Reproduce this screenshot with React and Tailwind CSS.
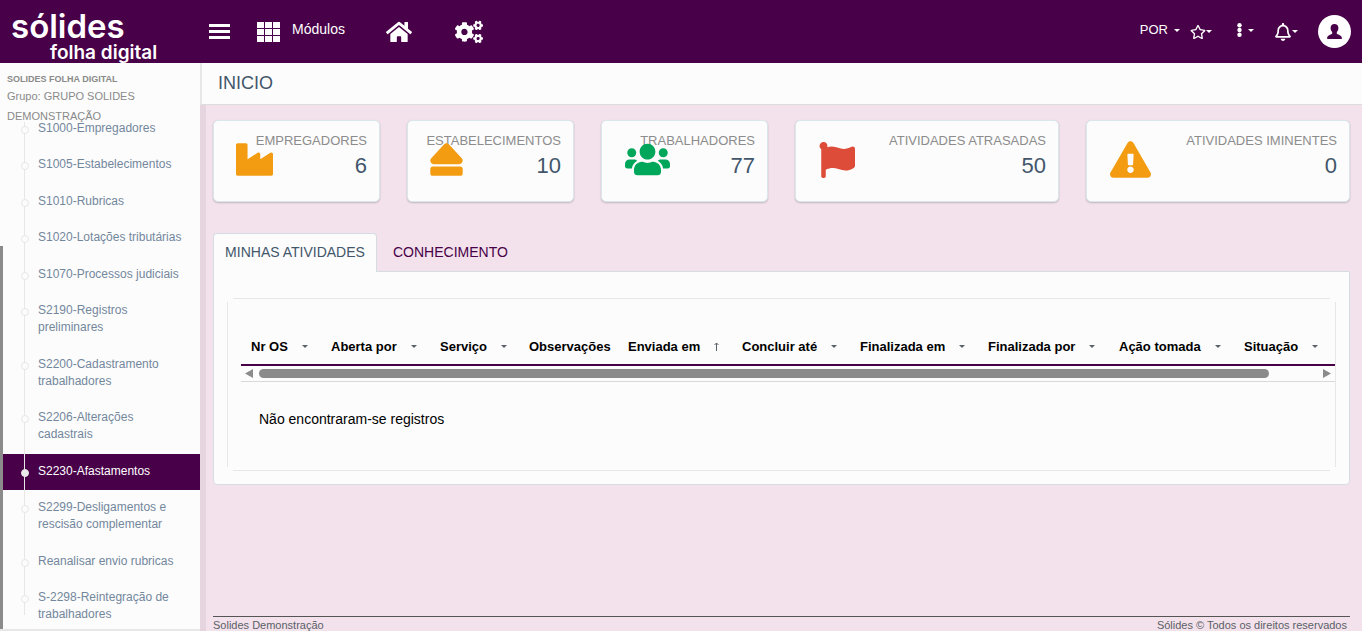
import {
  FaCogs,
  FaEject,
  FaExclamationTriangle,
  FaFlag,
  FaHome,
  FaIndustry,
  FaRegBell,
  FaRegStar,
  FaUsers,
} from 'react-icons/fa';

const MENU = [
  { label: 'S1000-Empregadores' },
  { label: 'S1005-Estabelecimentos' },
  { label: 'S1010-Rubricas' },
  { label: 'S1020-Lotações tributárias' },
  { label: 'S1070-Processos judiciais' },
  { label: 'S2190-Registros preliminares' },
  { label: 'S2200-Cadastramento trabalhadores' },
  { label: 'S2206-Alterações cadastrais' },
  { label: 'S2230-Afastamentos', active: true },
  { label: 'S2299-Desligamentos e rescisão complementar' },
  { label: 'Reanalisar envio rubricas' },
  { label: 'S-2298-Reintegração de trabalhadores' },
];

const CARDS = [
  { label: 'EMPREGADORES', value: 6, Icon: FaIndustry, size: 37, box: 'left-[22px] w-[37px]', color: 'text-[#f39c12]', span: 'col-span-2' },
  { label: 'ESTABELECIMENTOS', value: 10, Icon: FaEject, size: 37, box: 'left-[20px] w-[37px]', color: 'text-[#f39c12]', span: 'col-span-2' },
  { label: 'TRABALHADORES', value: 77, Icon: FaUsers, size: 45, box: 'left-[23px] w-[45px]', color: 'text-[#00a65a]', span: 'col-span-2' },
  { label: 'ATIVIDADES ATRASADAS', value: 50, Icon: FaFlag, size: 36, box: 'left-[23px] w-[36px]', color: 'text-[#dd4b39]', span: 'col-span-3' },
  { label: 'ATIVIDADES IMINENTES', value: 0, Icon: FaExclamationTriangle, size: 41, box: 'left-[23px] w-[41px]', color: 'text-[#f39c12]', span: 'col-span-3' },
];

const COLUMNS = [
  { label: 'Nr OS', width: 'w-[80px]', sort: 'none' },
  { label: 'Aberta por', width: 'w-[109px]', sort: 'none' },
  { label: 'Serviço', width: 'w-[89px]', sort: 'none' },
  { label: 'Observações', width: 'w-[99px]' },
  { label: 'Enviada em', width: 'w-[114px]', sort: 'asc' },
  { label: 'Concluir até', width: 'w-[118px]', sort: 'none' },
  { label: 'Finalizada em', width: 'w-[128px]', sort: 'none' },
  { label: 'Finalizada por', width: 'w-[131px]', sort: 'none' },
  { label: 'Ação tomada', width: 'w-[125px]', sort: 'none' },
  { label: 'Situação', width: '', sort: 'none' },
];

function Caret({ className = '' }) {
  return (
    <svg viewBox="0 0 6 3" className={`h-[3px] w-[6px] shrink-0 ${className}`} fill="currentColor" aria-hidden="true">
      <path d="M0 0h6L3 3z" />
    </svg>
  );
}

function TopBar() {
  return (
    <header className="flex h-[63px] shrink-0 items-center bg-[#480048] pr-[11px] text-white">
      <a
        href="#inicio"
        className="flex h-full w-[200px] shrink-0 flex-col pt-[10px] pl-[11px] font-[Inter,sans-serif] font-semibold"
      >
        <span className="text-[33px] leading-[33px]">sólides</span>
        <span className="pl-[39px] text-[19px] leading-[20px]">folha digital</span>
      </a>
      <button type="button" aria-label="Menu" className="ml-[9px] flex w-[21px] flex-col gap-[3px]">
        <span className="h-[3px] w-full bg-white" />
        <span className="h-[3px] w-full bg-white" />
        <span className="h-[3px] w-full bg-white" />
      </button>
      <button type="button" className="ml-[27px] flex items-center gap-[12px] text-[14px]">
        <svg viewBox="0 0 23 20" className="h-[20px] w-[23px]" fill="currentColor" aria-hidden="true">
          {[0, 8, 16].map((x) => [0, 7, 14].map((y) => <rect key={`${x}-${y}`} x={x} y={y} width="7" height="6" />))}
        </svg>
        <span className="pb-[4px]">Módulos</span>
      </button>
      <a href="#inicio" aria-label="Início" className="ml-[41px]">
        <FaHome size={26} />
      </a>
      <button type="button" aria-label="Configurações" className="ml-[43px]">
        <FaCogs size={28} />
      </button>

      <div className="ml-auto flex items-center">
        <button type="button" className="flex items-center gap-[6px] pb-[3px] text-[13px]">
          POR
          <Caret />
        </button>
        <button type="button" aria-label="Favoritos" className="ml-[10px] flex items-center">
          <FaRegStar size={16} />
          <Caret />
        </button>
        <button type="button" aria-label="Mais opções" className="ml-[25px] flex items-center gap-[6px] pb-[3px]">
          <svg viewBox="0 0 5 14" className="h-[14px] w-[5px]" fill="currentColor" aria-hidden="true">
            <circle cx="2.5" cy="2.2" r="2.2" />
            <circle cx="2.5" cy="7" r="2.2" />
            <circle cx="2.5" cy="11.8" r="2.2" />
          </svg>
          <Caret />
        </button>
        <button type="button" aria-label="Notificações" className="ml-[20px] flex items-center">
          <FaRegBell size={18} />
          <Caret />
        </button>
        <button type="button" aria-label="Perfil" className="ml-[20px] rounded-full bg-white p-[9px] text-[#480048]">
          <svg viewBox="0 0 15 15" className="h-[15px] w-[15px]" fill="currentColor" aria-hidden="true">
            <path d="M7.5 0C5.200 0 3.600 1.500 3.600 4c0 1.700.6 3.100 1.600 4v1.600C4.800 10.700.6 11 .2 13.600V15h14.600v-1.400C14.400 11 10.200 10.700 9.800 9.600V8c1-.9 1.600-2.300 1.600-4 0-2.500-1.600-4-3.900-4z" />
          </svg>
        </button>
      </div>
    </header>
  );
}

function MenuItem({ label, active }) {
  return (
    <li className={`group ${active ? 'bg-[#480048] text-white' : 'text-[#73879c]'}`}>
      <a href="#menu" className="flex items-stretch">
        <span className="relative ml-[18px] flex w-[8px] shrink-0 items-start justify-center pt-[15px]">
          <span className="absolute -inset-y-px left-[3px] w-px bg-[#e7e7e7] group-first:top-[11px] group-last:bottom-[18px]" />
          <span
            className={`relative h-[8px] w-[8px] rounded-full border border-[#e7e7e7] ${active ? 'bg-[#eaeaea]' : 'bg-[#fcfcfc]'}`}
          />
        </span>
        <span className="pt-[9px] pr-[10px] pb-[10px] pl-[9px] leading-[17px]">{label}</span>
      </a>
    </li>
  );
}

function Sidebar() {
  return (
    <aside className="flex w-[200px] shrink-0 flex-col border-b-2 border-[#e7e7e7] bg-[#fcfcfc] text-[12px]">
      <div className="h-[48px] pt-[9px] pl-[7px] text-[#8a8a8a]">
        <div className="text-[9px] leading-[14px] font-bold">SOLIDES FOLHA DIGITAL</div>
        <div className="pr-[40px] text-[11px] leading-[20px]">Grupo: GRUPO SOLIDES DEMONSTRAÇÃO</div>
      </div>
      <div className="flex min-h-0 flex-1">
        <div className="flex w-[3px] flex-col">
          <div className="mt-[135px] flex-1 bg-[#8b8b8b]" />
        </div>
        <ul className="-mb-[4px] flex flex-1 flex-col justify-between">
          {MENU.map((item) => (
            <MenuItem key={item.label} {...item} />
          ))}
        </ul>
      </div>
    </aside>
  );
}

function StatCard({ label, value, Icon, size, box, color, span }) {
  return (
    <article
      className={`relative h-[82px] rounded-[5px] border border-[#d9e6ea] bg-[#fcfcfc] pt-[10px] pr-[12px] text-right shadow-[0_1px_2px_rgba(0,0,0,0.2)] ${span}`}
    >
      <div className={`absolute inset-y-0 flex items-center justify-center pb-[3px] ${box} ${color}`}>
        <Icon size={size} />
      </div>
      <div className="text-[13px] leading-[20px] whitespace-nowrap text-[#8c8c8c]">{label}</div>
      <div className="text-[22px] leading-[30px] text-[#42566b]">{value}</div>
    </article>
  );
}

function ActivitiesTable() {
  return (
    <div className="pt-[27px] pb-[10px] pl-[13px]">
      <table className="w-full table-fixed text-left text-[14px] text-black">
        <thead>
          <tr className="border-b-2 border-[#480048] text-[13px]">
            {COLUMNS.map((c) => (
              <th key={c.label} scope="col" className={`h-[36px] pl-[10px] font-bold whitespace-nowrap ${c.width}`}>
                <span className="flex items-center gap-[14px]">
                  {c.label}
                  {c.sort === 'none' && <Caret className="text-[#5a6068]" />}
                  {c.sort === 'asc' && (
                    <svg viewBox="0 0 5 9" className="h-[9px] w-[5px]" fill="none" stroke="#5a6068" aria-label="Crescente">
                      <path d="M2.500 9V1M.5 3l2-2 2 2" />
                    </svg>
                  )}
                </span>
              </th>
            ))}
          </tr>
        </thead>
        <tbody>
          <tr className="border-b border-[#d9d9d9]">
            <td colSpan={COLUMNS.length} className="h-[16px]">
              <div className="flex items-center pr-[4px] pl-[4px] text-[#8b8b8b]">
                <svg viewBox="0 0 8 9" className="h-[9px] w-[8px]" fill="currentColor" aria-hidden="true">
                  <path d="M8 0v9L0 4.500z" />
                </svg>
                <div className="mr-[54px] ml-[6px] h-[9px] flex-1 rounded-full bg-[#8b8b8b]" />
                <svg viewBox="0 0 8 9" className="h-[9px] w-[8px]" fill="currentColor" aria-hidden="true">
                  <path d="M0 0v9l8-4.500z" />
                </svg>
              </div>
            </td>
          </tr>
          <tr>
            <td colSpan={COLUMNS.length} className="h-[76px] pl-[18px]">
              Não encontraram-se registros
            </td>
          </tr>
        </tbody>
      </table>
    </div>
  );
}

export default function App() {
  return (
    <div className="flex h-screen flex-col overflow-hidden bg-[#f3e2eb] font-['Liberation_Sans',Arial,sans-serif]">
      <TopBar />
      <div className="flex min-h-0 flex-1">
        <Sidebar />
        <div className="flex min-w-0 flex-1 flex-col">
          <div className="h-[42px] shrink-0 border-b border-l-2 border-[#dddddd] border-l-[#e7e7e7] bg-[#fcfcfc] pl-[16px]">
            <h1 className="text-[18px] leading-[40px] text-[#42566b]">INICIO</h1>
          </div>
          <div className="flex min-h-0 flex-1">
            <div className="w-[6px] shrink-0 bg-[#e6d5df]" />
            <main className="flex min-w-0 flex-1 flex-col pt-[15px] pr-[12px] pl-[7px]">
              <section className="grid grid-cols-12 gap-[27px]">
                {CARDS.map((card) => (
                  <StatCard key={card.label} {...card} />
                ))}
              </section>

              <div role="tablist" className="mt-[31px] flex text-[14px]">
                <button
                  type="button"
                  role="tab"
                  aria-selected="true"
                  className="relative z-10 -mb-px h-[39px] w-[164px] rounded-t-[4px] border border-b-0 border-[#d5dde2] bg-[#fcfcfc] pb-[2px] text-[#42566b]"
                >
                  MINHAS ATIVIDADES
                </button>
                <button type="button" role="tab" aria-selected="false" className="h-[38px] px-[16px] text-[#480048]">
                  CONHECIMENTO
                </button>
              </div>
              <section className="rounded-b-[4px] border border-[#d5dde2] bg-[#fcfcfc] px-[13px] pt-[26px] pb-[13px]">
                <div className="mx-[6px] mb-[3px] h-px bg-[#e7e7e7]" />
                <div className="border-x border-[#e7e7e7]">
                  <ActivitiesTable />
                </div>
                <div className="mx-[6px] mt-[3px] h-px bg-[#e7e7e7]" />
              </section>

              <footer className="mt-auto flex h-[15px] justify-between border-t border-[#555555] pr-[3px] text-[11px] leading-[17px] text-[#5a6068]">
                <span>Solides Demonstração</span>
                <span>Sólides © Todos os direitos reservados</span>
              </footer>
            </main>
          </div>
        </div>
      </div>
    </div>
  );
}
